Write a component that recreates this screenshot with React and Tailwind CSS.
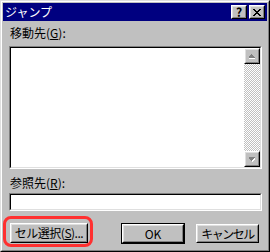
import React from "react";

const font = { fontFamily: '"Noto Sans CJK JP", "Liberation Sans", sans-serif' };

// Win98 style raised bevel
const Raised = ({ className = "", inner = "", children }) => (
  <div className={`border border-t-white border-l-white border-r-black border-b-black ${className}`}>
    <div className={`w-full h-full border border-t-[#dfdfdf] border-l-[#dfdfdf] border-r-[#808080] border-b-[#808080] bg-[#c0c0c0] ${inner}`}>
      {children}
    </div>
  </div>
);

const Sunken = ({ className = "", children }) => (
  <div className={`border border-t-[#808080] border-l-[#808080] border-r-white border-b-white ${className}`}>
    <div className="w-full h-full border border-t-black border-l-black border-r-[#dfdfdf] border-b-[#dfdfdf] bg-white flex">
      {children}
    </div>
  </div>
);

const Arrow = ({ up }) => (
  <svg width="14" height="14" viewBox="0 0 14 14" shapeRendering="crispEdges">
    {up ? (
      <g>
        <path d="M4 9h7v1H4zM5 8h5v1H5zM6 7h3v1H6zM7 6h1v1H7z" fill="#ffffff" />
        <path d="M3 8h7v1H3zM4 7h5v1H4zM5 6h3v1H5zM6 5h1v1H6z" fill="#808080" />
      </g>
    ) : (
      <g>
        <path d="M4 6h7v1H4zM5 7h5v1H5zM6 8h3v1H6zM7 9h1v1H7z" fill="#ffffff" />
        <path d="M3 5h7v1H3zM4 6h5v1H4zM5 7h3v1H5zM6 8h1v1H6z" fill="#808080" />
      </g>
    )}
  </svg>
);

const CloseGlyph = () => (
  <svg width="8" height="7" viewBox="0 0 8 7" shapeRendering="crispEdges">
    <path
      d="M0 0h2v1H0zM6 0h2v1H6zM1 1h2v1H1zM5 1h2v1H5zM2 2h4v1H2zM3 3h2v1H3zM2 4h4v1H2zM1 5h2v1H1zM5 5h2v1H5zM0 6h2v1H0zM6 6h2v1H6z"
      fill="#000"
    />
  </svg>
);

export default function App() {
  return (
    <div style={font} className="relative w-[270px] h-[252px] text-[12px] leading-[14px] text-black select-none">
      <div className="w-full h-full border border-t-[#dfdfdf] border-l-[#dfdfdf] border-r-black border-b-black">
        <div className="w-full h-full border border-t-white border-l-white border-r-[#808080] border-b-[#808080] bg-[#c0c0c0] p-px flex flex-col">
          {/* title bar */}
          <div className="h-[18px] bg-[#000080] flex items-center pl-[2px] pr-[2px]">
            <span className="text-white text-[12px] leading-[14px]">ジャンプ</span>
            <div className="flex-1" />
            <Raised className="w-[16px] h-[14px]" inner="flex items-center justify-center">
              <span className="font-bold text-[12px] leading-[12px] -mt-px">?</span>
            </Raised>
            <Raised className="w-[16px] h-[14px] ml-[2px]" inner="flex items-center justify-center">
              <CloseGlyph />
            </Raised>
          </div>

          {/* body */}
          <div className="flex-1 flex flex-col pl-[6px] pr-[5px]">
            <div className="mt-[5px] h-[14px] pl-px">
              移動先(<u>G</u>):
            </div>

            <Sunken className="mt-[6px] h-[123px]">
              <div className="flex-1" />
              <div className="w-[16px] flex flex-col">
                <Raised className="w-[16px] h-[16px]" inner="flex items-center justify-center">
                  <Arrow up />
                </Raised>
                <div className="flex-1 bg-[repeating-conic-gradient(#c0c0c0_0_25%,#ffffff_0_50%)] bg-[length:2px_2px]" />
                <Raised className="w-[16px] h-[16px]" inner="flex items-center justify-center">
                  <Arrow />
                </Raised>
              </div>
            </Sunken>

            <div className="mt-[7px] h-[14px] pl-px">
              参照先(<u>R</u>):
            </div>

            <Sunken className="mt-[3px] h-[18px]" />

            <div className="mt-[12px] flex items-start whitespace-nowrap">
              <Raised className="ml-px w-[78px] h-[20px] shrink-0" inner="flex items-center justify-center">
                <span className="tracking-[-0.5px]">
                  セル選択(<u>S</u>)...
                </span>
              </Raised>
              <div className="flex-1" />
              <div className="border border-black w-[64px] h-[21px] shrink-0">
                <Raised className="w-full h-full" inner="flex items-center justify-center">
                  <span>OK</span>
                </Raised>
              </div>
              <Raised className="ml-[11px] mr-[3px] mt-px w-[63px] h-[19px] shrink-0" inner="flex items-center justify-center">
                <span className="tracking-[-1.5px]">キャンセル</span>
              </Raised>
            </div>
          </div>
        </div>
      </div>

      {/* red annotation ring */}
      <div className="absolute left-[3px] top-[216px] w-[90px] h-[31px] border-[3px] border-[#ff3030] rounded-[8px]" />
    </div>
  );
}
